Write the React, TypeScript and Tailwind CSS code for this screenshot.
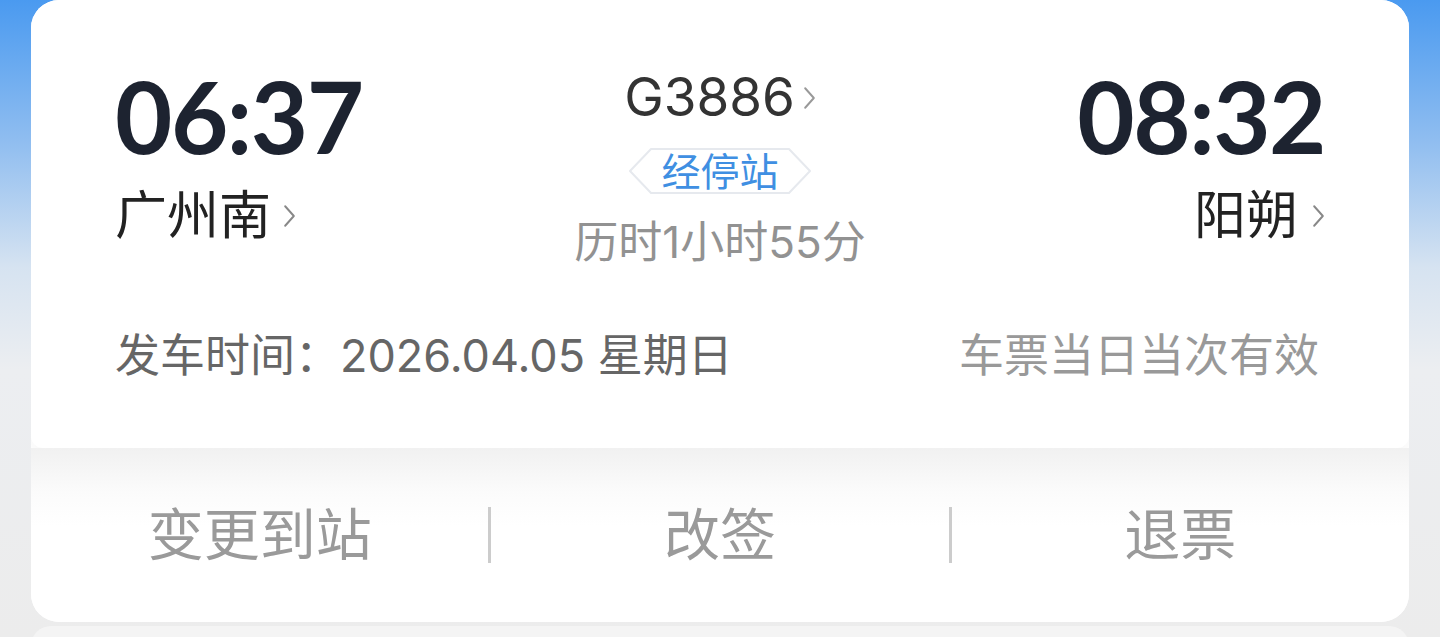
import React from 'react';

const font = '"Inter", "Noto Sans CJK SC", sans-serif';

function Chevron({ className }: { className?: string }) {
  return (
    <svg viewBox="0 0 12 24" className={className} fill="none">
      <polyline points="2,3 10,12 2,21" stroke="currentColor" strokeWidth="1.8" strokeLinecap="round" strokeLinejoin="round" />
    </svg>
  );
}

function StopsBadge() {
  return (
    <div className="relative mt-[24px] flex h-[46px] w-[182px] items-center justify-center">
      <svg viewBox="0 0 182 46" className="absolute inset-0 h-full w-full">
        <polygon
          points="1,23 22,1 160,1 181,23 160,45 22,45"
          fill="#ffffff"
          stroke="#e6e9ee"
          strokeWidth="2"
          strokeLinejoin="round"
        />
      </svg>
      <span className="relative text-[39px] leading-none text-[#3f8fe2]">经停站</span>
    </div>
  );
}

// big clock digits use a narrower face than the body text
const timeCls =
  "font-['Lato',sans-serif] text-[99px] font-bold leading-none tracking-[-1.5px] text-[#1d2330]";

export default function App() {
  return (
    <div
      className="h-[637px] w-full overflow-hidden bg-[linear-gradient(180deg,#4a9af0_0%,#8fbdf0_22%,#d6e3f1_42%,#eceef1_58%,#ececec_100%)] px-[31px]"
      style={{ fontFamily: font }}
    >
      <div className="overflow-hidden rounded-[28px] bg-white">
        {/* main info */}
        <div className="h-[448px] rounded-b-[12px] bg-white px-[84px] pt-[69px] shadow-[0_6px_18px_rgba(0,0,0,0.04)]">
          <div className="grid grid-cols-3 items-start">
            <div className="flex flex-col items-start">
              <div className={`${timeCls} -mt-[3px]`}>06:37</div>
              <div className="mt-[25px] flex items-center text-[52px] leading-none text-[#222222]">
                广州南
                <Chevron className="ml-[12px] h-[26px] w-[13px] text-[#888888]" />
              </div>
            </div>

            <div className="flex flex-col items-center pt-[2px]">
              <div className="flex items-center text-[53px] leading-none text-[#333333]">
                G3886
                <Chevron className="ml-[8px] h-[26px] w-[13px] text-[#999999]" />
              </div>
              <StopsBadge />
              <div className="mt-[26px] text-[44px] leading-none text-[#929292]">历时1小时55分</div>
            </div>

            <div className="flex flex-col items-end">
              <div className={`${timeCls} -mt-[3px]`}>08:32</div>
              <div className="mt-[25px] flex items-center text-[52px] leading-none text-[#222222]">
                阳朔
                <Chevron className="ml-[14px] h-[26px] w-[13px] text-[#888888]" />
              </div>
            </div>
          </div>

          <div className="mt-[69px] flex items-center justify-between text-[45px] leading-none">
            <span className="text-[#666666]">发车时间：2026.04.05 星期日</span>
            <span className="mr-[6px] text-[#999999]">车票当日当次有效</span>
          </div>
        </div>

        {/* actions */}
        <div className="flex h-[174px] items-center bg-[linear-gradient(180deg,#f1f1f1_0%,#fbfbfb_25%,#ffffff_45%)]">
          <div className="flex-1 text-center text-[56px] leading-none text-[#9a9a9a]">变更到站</div>
          <div className="h-[56px] w-[3px] bg-[#cccccc]" />
          <div className="flex-1 text-center text-[56px] leading-none text-[#9a9a9a]">改签</div>
          <div className="h-[56px] w-[3px] bg-[#cccccc]" />
          <div className="flex-1 text-center text-[56px] leading-none text-[#9a9a9a]">退票</div>
        </div>
      </div>
      <div className="mt-[4px] h-[20px] rounded-t-[20px] bg-[#f4f4f4]" />
    </div>
  );
}
